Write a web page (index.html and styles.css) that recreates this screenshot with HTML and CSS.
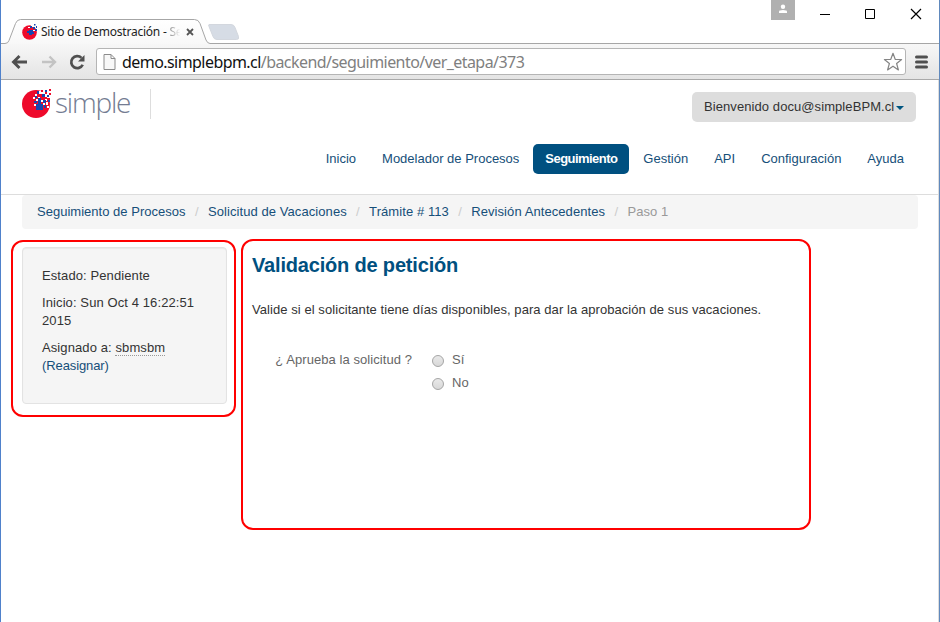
FILE: index.html
```html
<!DOCTYPE html>
<html lang="es">
<head>
  <meta charset="UTF-8" />
  <title>Sitio de Demostración - Seguimiento</title>
  <link rel="stylesheet" href="styles.css">
</head>
<body>

<svg width="0" height="0" class="defs">
  <symbol id="logo" viewBox="0 0 30 30">
    <circle cx="14" cy="15" r="14" fill="#ee0a2b"/>
    <path fill="#fff" d="M19 0h11v12h-2v-3h-3v3h-2V8h-3V5h-3V2h2zM13 5h2v2h-2zM11 8h2v2h-2zM14 10h2v2h-2zM24 13h2v3h-2zM21 14h2v2h-2zM25 17h2v2h-2zM16 8h2v2h-2zM19 11h2v2h-2zM12 15h2v2h-2z"/>
    <path fill="#1545b0" d="M14 15h7v6h-7zM16 9h3v6h-3zM12 12h3v2h-3zM21 11h3v3h-3zM22 16h2v3h-2zM15 2h2v3h-2zM20 5h3v3h-3zM25 6h2v2h-2zM26 11h2v2h-2zM23 1h2v2h-2zM13 7h2v2h-2z"/>
    <path fill="#ee0a2b" d="M19 1h2v2h-2zM23 3h2v2h-2zM27 4h2v2h-2zM23 8h2v2h-2zM26 9h2v2h-2zM27 0h2v2h-2z"/>
  </symbol>
</svg>

<div class="window">
  <div class="tabstrip">
    <svg class="tab-shape" width="939" height="31" viewBox="1 15 939 31">
      <defs>
        <linearGradient id="tab-bg" x1="0" y1="0" x2="0" y2="1">
          <stop offset="0" stop-color="#fff"/>
          <stop offset="1" stop-color="#f7f7f7"/>
        </linearGradient>
      </defs>
      <path d="M1 43.500h4q3 0 4-3l6.500-17q1.500-4 5-4h174q4 0 5.500 4l6 16.500q1.500 3.500 4 3.500h730v4H1z" fill="url(#tab-bg)" stroke="#a6a6a6"/>
      <path d="M209 24.500h22q3 0 4 3l3.500 9q1 3-2 3H217q-3 0-4-3l-4-10q-.8-2 0-2z" fill="#d6dce5" stroke="#d3d7de"/>
    </svg>
    <div class="tab">
      <svg class="favicon" width="16" height="16" viewBox="0 0 16 16">
        <circle cx="7.500" cy="8.500" r="7.300" fill="#ee0a2b"/>
        <path fill="#fff" d="M9 0h7v6h-2V4h-3V3H9zM6 3h2v1H6zM11 6h2v1h-2z"/>
        <path fill="#1545b0" d="M7 6h4v2h1v2h-2v1H7V9H5V7h2zM8 2h2v2H8zM11 3h2v2h-2zM12 0h1.500v1.500H12zM14 2h1v2h-1zM13 5h2v2h-2z"/>
      </svg>
      <span class="tab-title">Sitio de Demostración - <span>Se</span></span>
      <svg class="tab-close" width="8" height="8" viewBox="0 0 8 8"><path d="M1 1l6 6M7 1L1 7" stroke="#555" stroke-width="1.800"/></svg>
    </div>
    <div class="window-buttons">
      <div class="user">
        <svg width="24" height="20" viewBox="0 0 24 20" fill="#fff"><circle cx="12" cy="6.700" r="2.200"/><path d="M8 13v-1.500q0-1.500 4-1.500t4 1.500V13z"/></svg>
      </div>
      <svg width="120" height="28" viewBox="0 0 120 28" fill="none" stroke="#000">
        <path d="M5 14.500h10M50.500 9.500h9v9h-9z"/>
        <path d="M96 9l10 10M106 9L96 19" stroke-width="1.200"/>
      </svg>
    </div>
  </div>

  <div class="toolbar">
    <svg width="84" height="20" viewBox="0 0 84 20" fill="none">
      <path d="M17 10H4M9.500 4L3.500 10l6 6" stroke="#505050" stroke-width="2.900"/>
      <path d="M32 10h13M39.500 4.500L45 10l-5.500 5.500" stroke="#c3c3c3" stroke-width="2.400"/>
      <path d="M72.500 5.900A6 6 0 1 0 73.700 12.700" transform="translate(-1 0)" stroke="#505050" stroke-width="2.700"/>
      <path d="M74.500 3v6.500H68z" fill="#505050"/>
    </svg>
    <div class="address">
      <svg width="13" height="16" viewBox="0 0 13 16" fill="#f8f8f8" stroke="#8c8c8c"><path d="M1 .5h7l4 4v11H1zM8 .5v4h4"/></svg>
      <span class="url">demo.simplebpm.cl<span>/backend/seguimiento/ver_etapa/373</span></span>
      <svg class="star" width="20" height="20" viewBox="0 0 20 20" fill="#fff" stroke="#858585" stroke-width="1.200" stroke-linejoin="round"><path d="M10 1.300l2.200 6 6.400.2-5 4 1.800 6.400-5.400-3.700-5.400 3.700 1.800-6.400-5-4 6.400-.2z"/></svg>
    </div>
    <svg class="menu" width="13" height="14" viewBox="0 0 13 14"><path d="M1.500 2h10M1.500 7h10M1.500 12h10" stroke="#505050" stroke-width="3" stroke-linecap="round"/></svg>
  </div>

  <div class="page">
    <header>
      <div class="top">
        <a class="brand">
          <svg width="30" height="30"><use href="#logo"/></svg>
          <span>simple</span>
        </a>
        <div class="user-menu"><span>Bienvenido docu@simpleBPM.cl</span><i class="caret"></i></div>
      </div>
      <nav>
        <a>Inicio</a>
        <a>Modelador de Procesos</a>
        <a class="active">Seguimiento</a>
        <a>Gestión</a>
        <a>API</a>
        <a>Configuración</a>
        <a>Ayuda</a>
      </nav>
    </header>

    <ul class="breadcrumb">
      <li><a>Seguimiento de Procesos</a></li>
      <li><a>Solicitud de Vacaciones</a></li>
      <li><a>Trámite # 113</a></li>
      <li><a>Revisión Antecedentes</a></li>
      <li class="active">Paso 1</li>
    </ul>

    <div class="row">
      <aside class="marked">
        <div class="well">
          <p>Estado: Pendiente</p>
          <p>Inicio: Sun Oct 4 16:22:51 2015</p>
          <p>Asignado a: <abbr>sbmsbm</abbr> <a>(Reasignar)</a></p>
        </div>
      </aside>
      <main class="marked">
        <h1>Validación de petición</h1>
        <p>Valide si el solicitante tiene días disponibles, para dar la aprobación de sus vacaciones.</p>
        <form>
          <span class="question">¿ Aprueba la solicitud ?</span>
          <div class="options">
            <label><input type="radio" name="aprueba"><span>Sí</span></label>
            <label><input type="radio" name="aprueba"><span>No</span></label>
          </div>
        </form>
      </main>
    </div>
  </div>
</div>

</body>
</html>
```
FILE: styles.css
```css
* {
  box-sizing: border-box;
}
body {
  margin: 0;
  font-family: "Liberation Sans", Arial, sans-serif;
  font-size: 13px;
  line-height: 18px;
  color: #333;
  background: #fff;
}
svg {
  display: block;
  flex: none;
}
.defs {
  position: absolute;
}
.window {
  height: 622px;
  border-left: 1px solid #4f81cb;
  border-right: 1px solid #6089bd;
  overflow: hidden;
}

/* Browser chrome */
.tabstrip {
  position: relative;
  display: flex;
  justify-content: space-between;
  height: 44px;
}
.tab-shape {
  position: absolute;
  left: 0;
  top: 15px;
}
.tab {
  position: relative;
  display: flex;
  align-items: center;
  height: 24px;
  margin: 20px 0 0 21px;
  font-family: "Noto Sans", sans-serif;
  font-size: 12px;
  color: #222;
}
.tab-title {
  width: 138px;
  margin-left: 3px;
  white-space: nowrap;
  letter-spacing: -0.23px;
}
.tab-title span {
  color: transparent;
  background: linear-gradient(to right, #888, #fff 90%);
  -webkit-background-clip: text;
  background-clip: text;
}
.tab-close {
  margin-left: 7px;
}
.window-buttons {
  position: relative;
  display: flex;
  margin-right: 4px;
}
.user {
  width: 24px;
  height: 20px;
  margin-right: 20px;
  background: #b0b0b0;
}
.toolbar {
  position: relative;
  display: flex;
  align-items: center;
  height: 36px;
  padding: 0 11px 0 9px;
  background: linear-gradient(#f7f7f7, #e4e4e4);
  border-bottom: 1px solid #a9a9a9;
}
.address {
  display: flex;
  align-items: center;
  flex: 1;
  height: 27px;
  margin: 0 9px 0 2px;
  padding: 0 2px 0 6px;
  background: #fff;
  border: 1px solid #b5b5b5;
  border-radius: 3px;
}
.url {
  flex: 1;
  margin-left: 6px;
  font-family: "Noto Sans", sans-serif;
  font-size: 16px;
  letter-spacing: -0.56px;
  color: #111;
}
.url span {
  color: #808080;
}

/* Page header */
.page {
  border-right: 1px solid #ddd;
  height: 542px;
}
header {
  height: 115px;
  padding: 7px 22px 0 21px;
  border-bottom: 1px solid #ddd;
}
.top {
  display: flex;
  justify-content: space-between;
}
.brand {
  display: flex;
  align-items: center;
  width: 129px;
  height: 30px;
  margin-top: 2px;
  border-right: 1px solid #ddd;
}
.brand span {
  margin: -4px 0 0 3px;
  font-family: "Open Sans", sans-serif;
  font-weight: 300;
  font-size: 28px;
  line-height: 30px;
  letter-spacing: -1.2px;
  color: #747c92;
}
.user-menu {
  display: flex;
  align-items: center;
  width: 224px;
  height: 30px;
  margin-top: 5px;
  padding-left: 12px;
  letter-spacing: 0.08px;
  background: #ddd;
  border-radius: 5px;
}
.caret {
  margin: 2px 0 0 2px;
  border: 4px solid transparent;
  border-top-color: #005580;
  border-bottom: 0;
}
nav {
  display: flex;
  justify-content: flex-end;
  gap: 2px;
  margin-top: 22px;
}
nav a {
  padding: 6px 12px;
  border-radius: 5px;
  color: #164f79;
}
nav .active {
  width: 96px;
  background: #005080;
  color: #fff;
  font-weight: bold;
  letter-spacing: -0.55px;
}

.breadcrumb {
  display: flex;
  margin: 0 20px 10px 21px;
  padding: 8px 15px;
  height: 34px;
  list-style: none;
  letter-spacing: 0.08px;
  background: #f5f5f5;
  border-radius: 4px;
}
.breadcrumb li:first-child {
  letter-spacing: 0.02px;
}
.breadcrumb li + li::before {
  content: "/";
  padding: 0 9.3px;
  color: #ccc;
}
.breadcrumb a,
.well a {
  color: #164f79;
}
.breadcrumb .active {
  color: #999;
}

/* Content */
.row {
  display: flex;
  align-items: flex-start;
  gap: 5px;
  margin-left: 10px;
}
.marked {
  border: 2px solid #f00;
  border-radius: 12px;
}
aside {
  width: 225px;
  height: 177px;
  margin-top: 1px;
  padding: 5px 7px 0 9px;
}
.well {
  height: 157px;
  padding: 19px;
  letter-spacing: 0.1px;
  background: #f5f5f5;
  border: 1px solid #e3e3e3;
  border-radius: 4px;
  box-shadow: inset 0 1px 1px rgba(0, 0, 0, 0.05);
}
.well p {
  margin: 0 0 9px;
}
.well a {
  letter-spacing: -0.1px;
}
abbr {
  border-bottom: 1px dotted #999;
}
main {
  width: 570px;
  height: 291px;
  padding: 6px 9px;
  letter-spacing: 0.065px;
}
h1 {
  margin: 0 0 18px;
  font-size: 20px;
  line-height: 36px;
  letter-spacing: -0.18px;
  color: #005080;
}
main p {
  margin: 0 0 32px;
  white-space: nowrap;
}
form {
  display: flex;
  color: #666;
}
.question {
  width: 160px;
  text-align: right;
}
.options {
  margin-left: 20px;
}
label {
  display: flex;
  margin-bottom: 5px;
}
input[type=radio] {
  appearance: none;
  width: 12px;
  height: 12px;
  margin: 4px 8px 0 0;
  border: 1px solid #a5a5a5;
  border-radius: 50%;
  background: linear-gradient(#e9e9e9, #d8d8d8);
}
```
